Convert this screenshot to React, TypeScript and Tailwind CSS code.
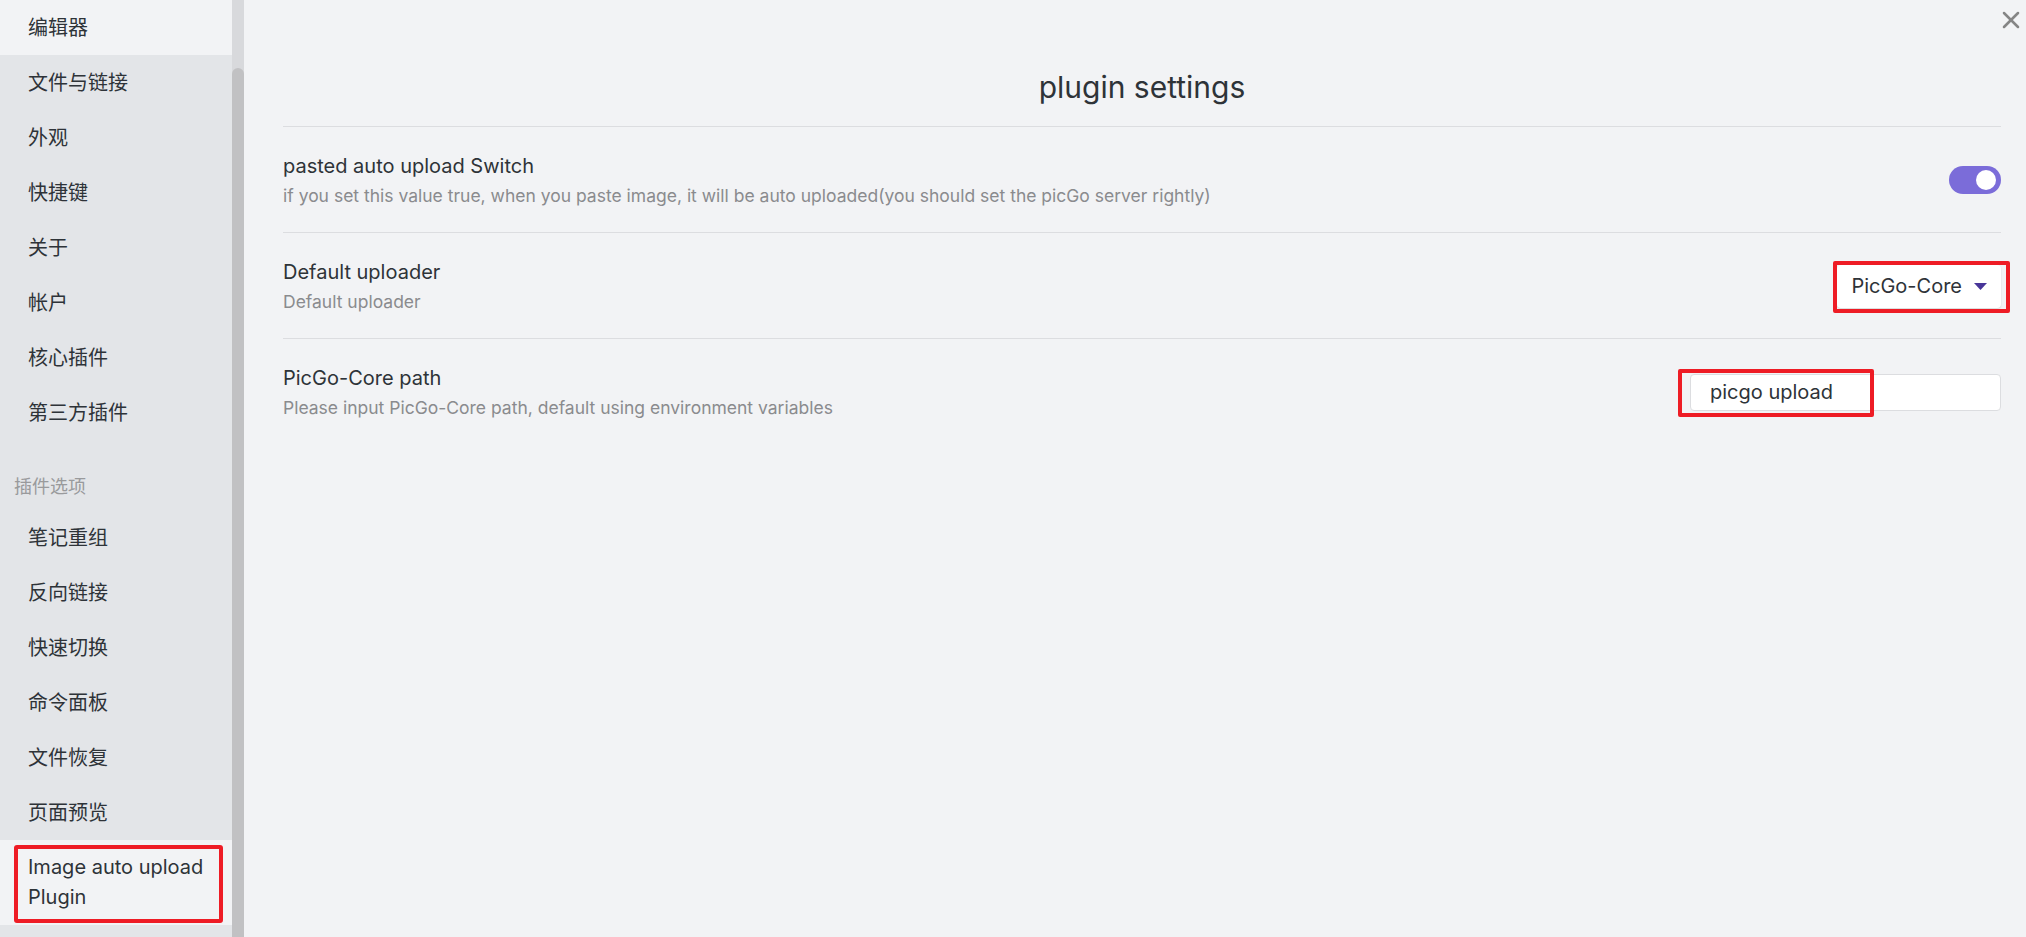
import { X } from 'lucide-react';

const FONT = { fontFamily: 'Inter, "Noto Sans CJK SC", sans-serif' };

const CORE_ITEMS = ['文件与链接', '外观', '快捷键', '关于', '帐户', '核心插件', '第三方插件'];
const PLUGIN_ITEMS = ['笔记重组', '反向链接', '快速切换', '命令面板', '文件恢复', '页面预览'];

function NavItem({ label, active }: { label: string; active?: boolean }) {
  return (
    <div
      className={`h-[55px] flex items-center pl-[28px] text-[20px] text-[#2e3338] ${active ? 'bg-[#f2f3f5]' : ''}`}
    >
      {label}
    </div>
  );
}

function Sidebar() {
  return (
    <aside className="flex h-full shrink-0">
      <div className="w-[232px] h-full bg-[#e3e5e8] overflow-hidden">
        <NavItem label="编辑器" active />
        {CORE_ITEMS.map((item) => (
          <NavItem key={item} label={item} />
        ))}
        <div className="pt-[34px] pb-[10px] pl-[14px] text-[18px] leading-[26px] text-[#999a9c]">插件选项</div>
        {PLUGIN_ITEMS.map((item) => (
          <NavItem key={item} label={item} />
        ))}
        {/* selected plugin tab */}
        <div className="relative bg-[#f2f3f5] pt-[12px] pb-[13px] pl-[28px] pr-[16px] text-[20px] leading-[30px] text-[#2e3338]">
          Image auto upload
          <br />
          Plugin
          <div className="absolute left-[14px] right-[9px] top-[5px] bottom-[2px] border-[4px] border-[#ee1c25] rounded-[3px]" />
        </div>
      </div>
      {/* scrollbar */}
      <div className="w-[12px] h-full flex flex-col bg-[#d8d9dc]">
        <div className="h-[68px] shrink-0" />
        <div className="flex-1 bg-[#c1c1c3] rounded-t-full" />
      </div>
    </aside>
  );
}

function SettingRow({
  name,
  desc,
  children,
}: {
  name: string;
  desc: string;
  children: React.ReactNode;
}) {
  return (
    <div className="flex items-center justify-between border-t border-[#dcdde0] pt-[25px] pb-[24px]">
      <div className="flex flex-col gap-[4px]">
        <div className="text-[20px] leading-[28px] text-[#2e3338]">{name}</div>
        <div className="text-[17.5px] leading-[24px] text-[#8a8b8e]">{desc}</div>
      </div>
      {children}
    </div>
  );
}

function Toggle() {
  return (
    <div className="w-[52px] h-[28px] rounded-full bg-[#7b6cd9] flex items-center justify-end pr-[5px]">
      <div className="w-[20px] h-[20px] rounded-full bg-white" />
    </div>
  );
}

export default function App() {
  return (
    <div className="flex w-full h-[937px] overflow-hidden bg-[#f2f3f5]" style={FONT}>
      <Sidebar />
      <main className="relative flex-1 h-full pl-[39px] pr-[25px]">
        <button className="absolute top-[6px] right-[1px] text-[#858585]">
          <X size={28} strokeWidth={2.2} />
        </button>

        <h2 className="pt-[68px] mb-[20px] text-center text-[30px] leading-[38px] text-[#2e3338]">
          plugin settings
        </h2>

        <SettingRow
          name="pasted auto upload Switch"
          desc="if you set this value true, when you paste image, it will be auto uploaded(you should set the picGo server rightly)"
        >
          <Toggle />
        </SettingRow>

        <SettingRow name="Default uploader" desc="Default uploader">
          <div className="relative">
            <div className="flex items-center gap-[12px] h-[43px] pl-[14px] pr-[14px] bg-white rounded-[4px] shadow-[0_1px_2px_rgba(0,0,0,0.12)] text-[20px] text-[#2e3338]">
              PicGo-Core
              <svg width="13" height="7" viewBox="0 0 13 7" className="fill-[#483699]">
                <path d="M0 0h13L6.5 7z" />
              </svg>
            </div>
            <div className="absolute -left-[4px] -right-[9px] -top-[4px] -bottom-[5px] border-[4px] border-[#ee1c25] rounded-[2px]" />
          </div>
        </SettingRow>

        <SettingRow
          name="PicGo-Core path"
          desc="Please input PicGo-Core path, default using environment variables"
        >
          <div className="relative">
            <div className="w-[311px] h-[37px] flex items-center pl-[19px] bg-white border border-[#dcdde0] rounded-[4px] text-[20px] text-[#2e3338]">
              picgo upload
            </div>
            <div className="absolute -left-[12px] -top-[5px] w-[196px] h-[48px] border-[4px] border-[#ee1c25] rounded-[2px]" />
          </div>
        </SettingRow>
      </main>
    </div>
  );
}
